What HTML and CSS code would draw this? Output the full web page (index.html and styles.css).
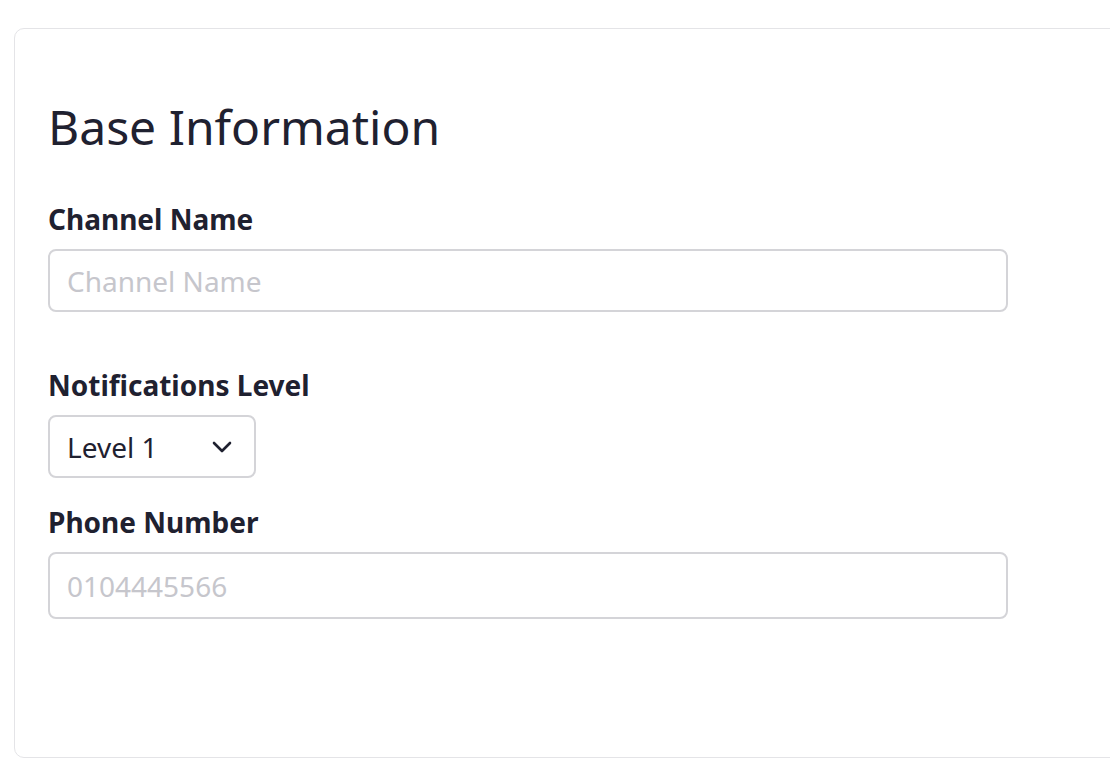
FILE: index.html
```html
<!DOCTYPE html>
<html>
<head>
<meta charset="utf-8">
<link rel="stylesheet" href="styles.css">
</head>
<body>
<section class="card">
  <h1 class="title">Base Information</h1>
  <div class="field field-first">
    <label class="label">Channel Name</label>
    <input class="input" type="text" placeholder="Channel Name">
  </div>
  <div class="field field-select">
    <label class="label">Notifications Level</label>
    <div class="select">
      <span class="select-value">Level 1</span>
      <svg class="chevron" width="20" height="12" viewBox="0 0 20 12"><path d="M2 2l8 8 8-8" fill="none" stroke="#1f2130" stroke-width="2.6" stroke-linecap="round" stroke-linejoin="round"/></svg>
    </div>
  </div>
  <div class="field">
    <label class="label">Phone Number</label>
    <input class="input input-tall" type="text" placeholder="0104445566">
  </div>
</section>
</body>
</html>
```
FILE: styles.css
```css
html, body {
  margin: 0;
  background: #ffffff;
}
body {
  padding: 28px 0 0 14px;
  font-family: "Noto Sans", "Open Sans", sans-serif;
  color: #1f2130;
  overflow: hidden;
}
.card {
  box-sizing: border-box;
  width: 1130px;
  height: 730px;
  border: 1px solid #e4e4e7;
  border-radius: 10px;
  padding: 66px 0 0 33px;
}
.title {
  margin: 0 0 42px;
  font-size: 48px;
  font-weight: 400;
  line-height: 64px;
  color: #1f2130;
}
.field {
  display: flex;
  flex-direction: column;
  align-items: flex-start;
  margin-bottom: 36px;
}
.field-first {
  margin-bottom: 55px;
}
.field-select {
  margin-bottom: 26px;
}
.label {
  font-size: 28px;
  font-weight: 700;
  line-height: 36px;
  margin-bottom: 12px;
  color: #1f2130;
}
.input {
  box-sizing: border-box;
  width: 960px;
  height: 63px;
  border: 2px solid #d4d4d8;
  border-radius: 8px;
  padding: 0 17px;
  font-family: inherit;
  font-size: 28px;
  color: #1f2130;
  outline: none;
}
.input-tall {
  height: 67px;
}
.input::placeholder {
  color: #c6c6cc;
}
.select {
  box-sizing: border-box;
  width: 208px;
  height: 63px;
  border: 2px solid #d4d4d8;
  border-radius: 8px;
  padding: 0 22px 0 17px;
  display: flex;
  align-items: center;
  justify-content: space-between;
  font-size: 28px;
}
.chevron {
  display: block;
}
```
